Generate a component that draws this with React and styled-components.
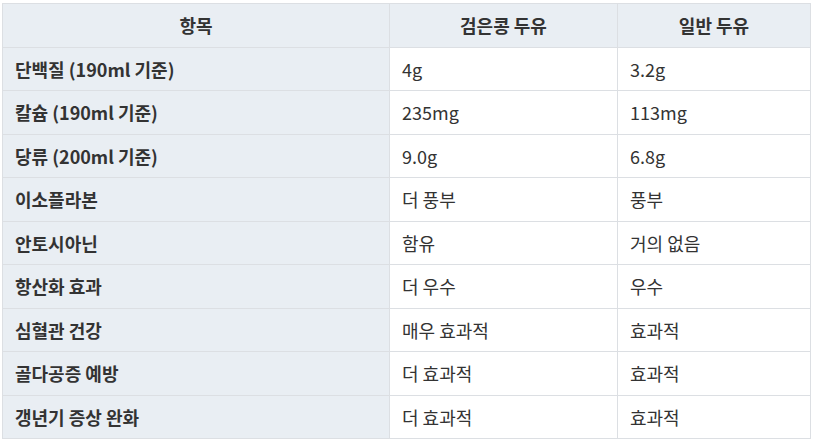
import React from 'react';
import styled, { createGlobalStyle } from 'styled-components';

const GlobalStyle = createGlobalStyle`
  body {
    margin: 0;
    background: #ffffff;
    font-family: "Noto Sans CJK KR", "Noto Sans", sans-serif;
    color: #333333;
  }
`;

const rows = [
  ['단백질 (190ml 기준)', '4g', '3.2g'],
  ['칼슘 (190ml 기준)', '235mg', '113mg'],
  ['당류 (200ml 기준)', '9.0g', '6.8g'],
  ['이소플라본', '더 풍부', '풍부'],
  ['안토시아닌', '함유', '거의 없음'],
  ['항산화 효과', '더 우수', '우수'],
  ['심혈관 건강', '매우 효과적', '효과적'],
  ['골다공증 예방', '더 효과적', '효과적'],
  ['갱년기 증상 완화', '더 효과적', '효과적'],
];

function App() {
  return (
    <>
      <GlobalStyle />
      <Wrapper>
        <Table>
          <colgroup>
            <col style={{ width: 387 }} />
            <col style={{ width: 228 }} />
            <col style={{ width: 193 }} />
          </colgroup>
          <thead>
            <tr>
              <HeadCell>항목</HeadCell>
              <HeadCell>검은콩 두유</HeadCell>
              <HeadCell>일반 두유</HeadCell>
            </tr>
          </thead>
          <tbody>
            {rows.map((r) => (
              <tr key={r[0]}>
                <Cell $label>{r[0]}</Cell>
                <Cell>{r[1]}</Cell>
                <Cell>{r[2]}</Cell>
              </tr>
            ))}
          </tbody>
        </Table>
      </Wrapper>
    </>
  );
}

const Wrapper = styled.div`
  padding: 3px 0 0 2px;
`;

const Table = styled.table`
  border-collapse: collapse;
  table-layout: fixed;
  width: 808px;
  font-size: 18px;
  line-height: 24px;
`;

const HeadCell = styled.th`
  background: #e9eef3;
  border: 1px solid #dcdfe3;
  padding: 9.25px 12px;
  font-weight: 700;
  text-align: center;
  color: #333333;
`;

const Cell = styled.td`
  background: ${(p) => (p.$label ? '#e9eef3' : '#ffffff')};
  border: 1px solid #dcdfe3;
  padding: 9.25px 12px;
  font-weight: ${(p) => (p.$label ? 700 : 400)};
  text-align: left;
  color: #333333;
`;

export default App;
